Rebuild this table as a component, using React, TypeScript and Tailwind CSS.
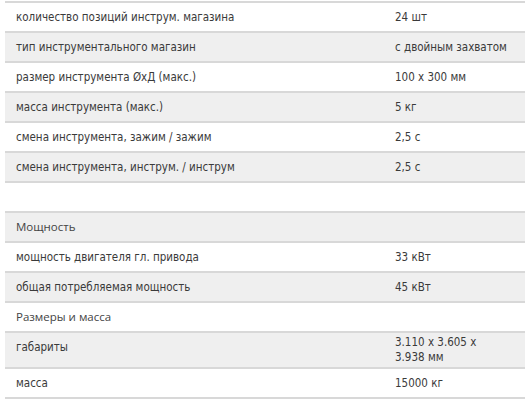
const rows: { label: string; value?: string; head?: boolean }[] = [
  { label: "количество позиций инструм. магазина", value: "24 шт" },
  { label: "тип инструментального магазин", value: "с двойным захватом" },
  { label: "размер инструмента ØxД (макс.)", value: "100 x 300 мм" },
  { label: "масса инструмента (макс.)", value: "5 кг" },
  { label: "смена инструмента, зажим / зажим", value: "2,5 с" },
  { label: "смена инструмента, инструм. / инструм", value: "2,5 с" },
  { label: "" },
  { label: "Мощность", head: true },
  { label: "мощность двигателя гл. привода", value: "33 кВт" },
  { label: "общая потребляемая мощность", value: "45 кВт" },
  { label: "Размеры и масса", head: true },
  { label: "габариты", value: "3.110 x 3.605 x\n3.938 мм" },
  { label: "масса", value: "15000 кг" },
];

const App = () => {
  return (
    <div className="w-[531px] h-[404px] bg-white overflow-hidden pt-[1px] px-[5px] font-['DejaVu_Sans_Condensed','DejaVu_Sans',sans-serif] text-[11.5px] text-[#3a3a3a]">
      <table className="w-[520px] border-collapse table-fixed border-t-2 border-[#d8d8d8]">
        <colgroup>
          <col className="w-[375px]" />
          <col className="w-[145px]" />
        </colgroup>
        <tbody>
          {rows.map((row, i) => (
            <tr
              key={i}
              className={`border-b-2 border-[#d8d8d8] ${i % 2 === 1 ? "bg-[#efefef]" : "bg-white"}`}
            >
              <td
                className={`h-[30px] pt-[6px] pb-0 pl-[11px] align-top leading-[16px] ${
                  row.head ? "font-['Open_Sans',sans-serif] text-[11.5px] text-[#444]" : ""
                }`}
              >
                {row.label}
              </td>
              <td className="h-[30px] py-[2px] pl-[15px] pr-[10px] align-middle leading-[15px] whitespace-pre-line">
                {row.value}
              </td>
            </tr>
          ))}
        </tbody>
      </table>
    </div>
  );
};

export default App;
